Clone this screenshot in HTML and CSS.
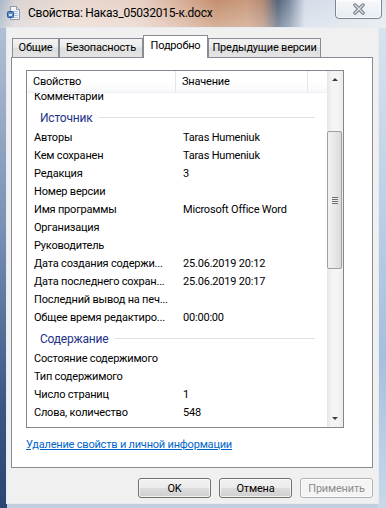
FILE: index.html
```html
<!DOCTYPE html>
<html lang="ru">
<head>
  <meta charset="UTF-8">
  <title>Свойства: Наказ_05032015-к.docx</title>
  <link rel="stylesheet" href="styles.css">
</head>
<body>
  <div class="window">
    <div class="titlebar">
      <svg class="app-icon" viewBox="0 0 16 16" width="16" height="16">
        <path d="M4.5 1.5h6l3 3v10h-9z" fill="#f4f6f9" stroke="#8d99aa"/>
        <path d="M10.5 1.5v3h3" fill="#dfe5ec" stroke="#8d99aa"/>
        <path d="M7 6.5h5M7 8.5h5M7 10.5h5M7 12.5h5" stroke="#a9c1df"/>
        <rect x="1.5" y="6.5" width="6" height="6" rx="1" fill="#4f7fc4" stroke="#2d5a9c"/>
        <path d="M3 8.5l0.8 2.5 0.7-2 0.7 2 0.8-2.5" fill="none" stroke="#fff" stroke-width="0.8"/>
      </svg>
      <span class="title">Свойства: Наказ_05032015-к.docx</span>
      <div class="close-btn">
        <svg viewBox="0 0 14 12" width="14" height="12">
          <path d="M3 2l8 8M11 2l-8 8" stroke="#6f7682" stroke-width="3.4" stroke-linecap="round"/>
          <path d="M3 2l8 8M11 2l-8 8" stroke="#d9dde3" stroke-width="1.6" stroke-linecap="round"/>
        </svg>
      </div>
    </div>

    <div class="client">
      <ul class="tabs">
        <li class="tab tab-general">Общие</li>
        <li class="tab tab-security">Безопасность</li>
        <li class="tab tab-details selected">Подробно</li>
        <li class="tab tab-versions">Предыдущие версии</li>
      </ul>

      <div class="panel">
        <div class="listview">
          <div class="list-main">
            <div class="list-head">
              <div class="head-cell col-name">Свойство</div>
              <div class="head-cell col-value">Значение</div>
              <div class="head-cell col-rest"></div>
            </div>
            <div class="list-body">
              <div class="row first-row"><span class="prop">Комментарии</span><span class="val"></span></div>

              <div class="group"><span class="group-title">Источник</span><span class="group-line"></span></div>
              <div class="row"><span class="prop">Авторы</span><span class="val">Taras Humeniuk</span></div>
              <div class="row"><span class="prop">Кем сохранен</span><span class="val">Taras Humeniuk</span></div>
              <div class="row"><span class="prop">Редакция</span><span class="val">3</span></div>
              <div class="row"><span class="prop">Номер версии</span><span class="val"></span></div>
              <div class="row"><span class="prop">Имя программы</span><span class="val">Microsoft Office Word</span></div>
              <div class="row"><span class="prop">Организация</span><span class="val"></span></div>
              <div class="row"><span class="prop">Руководитель</span><span class="val"></span></div>
              <div class="row"><span class="prop">Дата создания содержи...</span><span class="val">25.06.2019 20:12</span></div>
              <div class="row"><span class="prop">Дата последнего сохран...</span><span class="val">25.06.2019 20:17</span></div>
              <div class="row"><span class="prop">Последний вывод на печ...</span><span class="val"></span></div>
              <div class="row"><span class="prop">Общее время редактиро...</span><span class="val">00:00:00</span></div>

              <div class="group"><span class="group-title">Содержание</span><span class="group-line"></span></div>
              <div class="row"><span class="prop">Состояние содержимого</span><span class="val"></span></div>
              <div class="row"><span class="prop">Тип содержимого</span><span class="val"></span></div>
              <div class="row"><span class="prop">Число страниц</span><span class="val">1</span></div>
              <div class="row"><span class="prop">Слова, количество</span><span class="val">548</span></div>
            </div>
          </div>

          <div class="scrollbar">
            <div class="sb-arrow"><span class="arrow-up"></span></div>
            <div class="sb-track">
              <div class="sb-thumb"><span class="grip"></span></div>
            </div>
            <div class="sb-arrow"><span class="arrow-down"></span></div>
          </div>
        </div>

        <a href="#" class="remove-link">Удаление свойств и личной информации</a>
      </div>

      <div class="buttons">
        <button class="btn">OK</button>
        <button class="btn">Отмена</button>
        <button class="btn" disabled>Применить</button>
      </div>
    </div>
  </div>
</body>
</html>
```

FILE: styles.css
```css
/* Windows 7 style properties dialog */
* {
  box-sizing: border-box;
}

body {
  margin: 0;
  width: 386px;
  height: 508px;
  overflow: hidden;
  font-family: Roboto, "Noto Sans", sans-serif;
  font-size: 11px;
  letter-spacing: -0.2px;
  color: #000;
}

.window {
  height: 508px;
  display: flex;
  flex-direction: column;
  background:
    linear-gradient(#b9c6d8, #7890b4 45%, #3a5684 80%, #2c4674) left top / 7px 100% no-repeat,
    linear-gradient(#dde5ef, #bcd0e6 40%, #a6bfdd 70%, #c9d8ea) right top / 9px 100% no-repeat,
    #c3cfde;
}

/* title bar */
.titlebar {
  height: 28px;
  flex: none;
  display: flex;
  align-items: flex-start;
  background:
    linear-gradient(rgba(255, 255, 255, 0), rgba(255, 255, 255, 0.3)),
    linear-gradient(90deg, #a9b6c8 0, #d9d3d2 4%, #e9d9d0 18%, #e7d0c5 36%, #d9b29c 46%, #c4906f 56%, #c99a7c 64%, #b58b76 68%, #56657c 72%, #7d8ca3 75%, #d4dce7 79%, #e2e7ee 100%);
}

.app-icon {
  margin: 5px 0 0 6px;
  flex: none;
}

.title {
  margin: 6px 0 0 6px;
  font-size: 12px;
  line-height: 15px;
  letter-spacing: -0.25px;
}

.close-btn {
  margin: -1px 4px 0 auto;
  width: 47px;
  height: 20px;
  border: 1px solid #7c8593;
  border-radius: 0 0 4px 4px;
  background: linear-gradient(rgba(255, 255, 255, 0.75), rgba(235, 240, 246, 0.55));
  display: flex;
  align-items: center;
  justify-content: center;
  box-shadow: inset 0 0 0 1px rgba(255, 255, 255, 0.6);
}

/* client area */
.client {
  flex: none;
  margin-left: 7px;
  width: 371px;
  height: 475px;
  padding: 7px 0 0 4px;
  background: #f0f0f0;
  box-shadow: 0 0 0 1px #e6ebf2;
}

.tabs {
  list-style: none;
  margin: 0 0 -1px;
  padding: 0 0 0 1px;
  height: 23px;
  display: flex;
  align-items: flex-start;
  position: relative;
  z-index: 1;
}

.tab {
  margin-top: 3px;
  height: 19px;
  line-height: 17px;
  text-align: center;
  white-space: nowrap;
  border: 1px solid #898c95;
  border-bottom: none;
  background: linear-gradient(#f3f3f3, #ebebeb 45%, #dedede 50%, #e4e4e4);
}

.tab-general {
  width: 47px;
}

.tab-security {
  width: 84px;
}

.tab-details {
  width: 65px;
}

.tab-versions {
  width: 113px;
}

.tab.selected {
  margin-top: 0;
  height: 23px;
  line-height: 19px;
  background: #fff;
}

.panel {
  width: 362px;
  height: 411px;
  border: 1px solid #898c95;
  background: #fff;
  padding: 12px 0 0 14px;
}

/* list view */
.listview {
  width: 318px;
  height: 358px;
  border: 1px solid #828790;
  display: flex;
}

.list-main {
  flex: 1;
  display: flex;
  flex-direction: column;
  min-width: 0;
}

.list-head {
  height: 22px;
  flex: none;
  display: flex;
  background: linear-gradient(#fff, #fff 50%, #f7f8fa);
  border-bottom: 1px solid #eef0f3;
  position: relative;
  z-index: 1;
}

.head-cell {
  line-height: 21px;
  padding-left: 6px;
  border-right: 1px solid #e3e5e8;
}

.col-name {
  width: 149px;
}

.col-value {
  width: 132px;
}

.col-rest {
  flex: 1;
  border-right: none;
}

.list-body {
  flex: 1;
  overflow: hidden;
}

.row {
  height: 18px;
  line-height: 18px;
  display: flex;
  white-space: nowrap;
}

.first-row {
  margin-top: -5px;
}

.prop {
  width: 149px;
  padding-left: 7px;
  overflow: hidden;
}

.val {
  padding-left: 7px;
}

.group {
  height: 23px;
  display: flex;
  align-items: center;
  padding: 0 12px 0 13px;
}

.group-title {
  color: #1e3287;
  font-size: 12px;
}

.group-line {
  flex: 1;
  height: 1px;
  margin-left: 7px;
  background: #dde0e6;
}

/* scrollbar */
.scrollbar {
  width: 16px;
  flex: none;
  display: flex;
  flex-direction: column;
  background: linear-gradient(90deg, #e6e6e6, #f4f4f4 30%, #f4f4f4 70%, #ebebeb);
}

.sb-arrow {
  height: 17px;
  display: flex;
  align-items: center;
  justify-content: center;
}

.arrow-up {
  border-left: 3px solid transparent;
  border-right: 3px solid transparent;
  border-bottom: 3px solid #3d3d3d;
}

.arrow-down {
  border-left: 3px solid transparent;
  border-right: 3px solid transparent;
  border-top: 3px solid #3d3d3d;
}

.sb-track {
  flex: 1;
}

.sb-thumb {
  margin: 43px 1px 0 0;
  height: 138px;
  border: 1px solid #a0a0a0;
  border-radius: 2px;
  background: linear-gradient(90deg, #f2f2f2, #e8e8e8 50%, #d9d9d9);
  display: flex;
  align-items: center;
  justify-content: center;
}

.grip {
  width: 6px;
  height: 7px;
  background: repeating-linear-gradient(#6e6e6e 0, #6e6e6e 1px, #eeeeee 1px, #eeeeee 2px);
}

.remove-link {
  display: inline-block;
  margin-top: 9px;
  line-height: 16px;
  color: #0066cc;
  text-decoration: underline;
}

/* dialog buttons */
.buttons {
  margin-top: 10px;
  padding-right: 5px;
  display: flex;
  justify-content: flex-end;
  gap: 8px;
}

.btn {
  width: 73px;
  height: 20px;
  padding: 0;
  font-family: inherit;
  font-size: 11px;
  letter-spacing: -0.2px;
  color: #000;
  border: 1px solid #707070;
  border-radius: 3px;
  background: linear-gradient(#f2f2f2, #ebebeb 48%, #dddddd 52%, #cfcfcf);
  box-shadow: inset 0 0 0 1px rgba(255, 255, 255, 0.7);
}

.btn:disabled {
  color: #8d8d8d;
  border-color: #adb2b5;
  background: #f4f4f4;
}
```
